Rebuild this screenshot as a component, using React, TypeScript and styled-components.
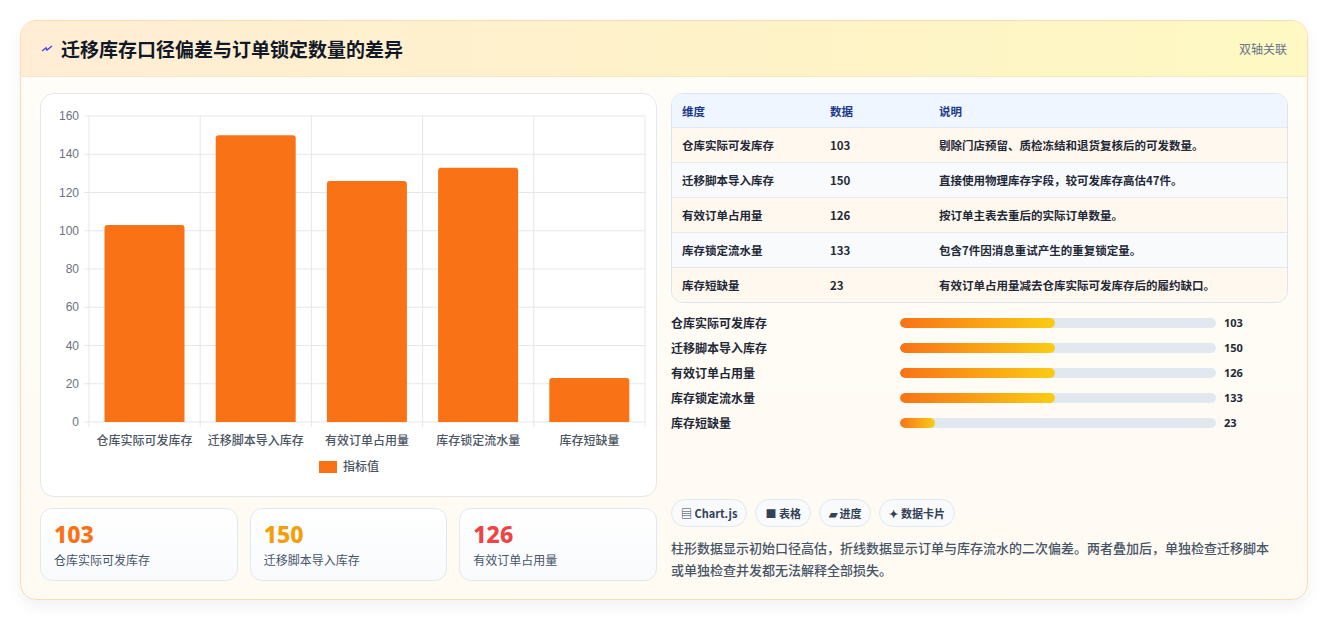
import React from 'react';
import styled, { createGlobalStyle } from 'styled-components';

const Global = createGlobalStyle`
  body { margin: 0; background: #f3f4f6; font-family: "Noto Sans CJK SC", "Noto Sans", sans-serif; }
`;

const Page = styled.div`
  padding: 20px 20px 22px 20px;
  background: #fff;
  height: 621px;
  box-sizing: border-box;
`;

const Card = styled.div`
  width: 1286px;
  border: 1px solid #f7dcb4;
  border-radius: 16px;
  background: linear-gradient(180deg, #fffdf9, #fffaf2);
  box-shadow: 0 6px 16px rgba(0, 0, 0, 0.06);
  overflow: hidden;
`;

const Header = styled.div`
  height: 55px;
  display: flex;
  align-items: center;
  justify-content: space-between;
  padding: 0 20px;
  background: linear-gradient(90deg, #ffedd5, #fef3c7 60%, #fef9c3);
  border-bottom: 1px solid #fde6c4;
`;

const Title = styled.h1`
  margin: 0;
  font-size: 19px;
  font-weight: 700;
  color: #111827;
  display: flex;
  align-items: center;
  gap: 8px;
`;

const Tag = styled.span`
  font-size: 12px;
  color: #64748b;
`;

const Body = styled.div`
  display: grid;
  grid-template-columns: 617px 617px;
  gap: 14px;
  padding: 16px 19px 18px 19px;
`;

const Col = styled.div`
  display: flex;
  flex-direction: column;
`;

const ChartBox = styled.div`
  height: 404px;
  border: 1px solid #e5e7eb;
  border-radius: 14px;
  background: #fff;
  box-sizing: border-box;
`;

const Stats = styled.div`
  display: grid;
  grid-template-columns: repeat(3, 1fr);
  gap: 12px;
  margin-top: 11px;
`;

const Stat = styled.div`
  height: 73px;
  box-sizing: border-box;
  border: 1px solid #e2e8f0;
  border-radius: 12px;
  background: linear-gradient(180deg, #fff, #f8fafc);
  padding: 12px 13px;
`;

const StatNum = styled.div<{ $c: string }>`
  font-size: 23px;
  font-weight: 800;
  color: ${p => p.$c};
  line-height: 26px;
  font-family: "Noto Sans", sans-serif;
`;

const StatLbl = styled.div`
  font-size: 12px;
  color: #475569;
  margin-top: 4px;
`;

const Table = styled.div`
  border: 1px solid #dbe3ee;
  border-radius: 12px;
  overflow: hidden;
  background: #fff;
`;

const Row = styled.div<{ $bg: string; $head?: boolean }>`
  display: grid;
  grid-template-columns: 148px 109px 1fr;
  height: ${p => (p.$head ? 33 : 35)}px;
  box-sizing: border-box;
  align-items: center;
  padding-left: 10px;
  background: ${p => p.$bg};
  border-top: ${p => (p.$head ? 'none' : '1px solid #e5eaf1')};
  font-size: 11.5px;
  color: ${p => (p.$head ? '#1e3a8a' : '#1f2937')};
  font-weight: ${p => (p.$head ? 700 : 600)};
`;

const Bars = styled.div`
  display: flex;
  flex-direction: column;
  gap: 8px;
  margin-top: 11px;
`;

const BarRow = styled.div`
  display: grid;
  grid-template-columns: 229px 316px 1fr;
  align-items: center;
  height: 17px;
  font-size: 12px;
  font-weight: 600;
  color: #1f2937;
`;

const Track = styled.div`
  height: 10px;
  border-radius: 5px;
  background: #e2e8f0;
  overflow: hidden;
`;

const Fill = styled.div`
  height: 100%;
  border-radius: 5px;
  background: linear-gradient(90deg, #f97316, #facc15);
`;

const Val = styled.span`
  padding-left: 8px;
  font-weight: 700;
  font-size: 11px;
  font-family: "Noto Sans", sans-serif;
`;

const Chips = styled.div`
  display: flex;
  gap: 8px;
  margin-top: auto;
`;

const Chip = styled.span`
  border: 1px solid #e2e8f0;
  border-radius: 14px;
  background: #f8fafc;
  padding: 5px 9px;
  font-size: 11px;
  font-weight: 600;
  color: #334155;
`;

const Note = styled.p`
  margin: 10px 0 0;
  width: 610px;
  font-size: 13px;
  line-height: 22px;
  font-weight: 500;
  color: #475569;
`;

const items = [
  { k: '仓库实际可发库存', v: 103, d: '剔除门店预留、质检冻结和退货复核后的可发数量。' },
  { k: '迁移脚本导入库存', v: 150, d: '直接使用物理库存字段，较可发库存高估47件。' },
  { k: '有效订单占用量', v: 126, d: '按订单主表去重后的实际订单数量。' },
  { k: '库存锁定流水量', v: 133, d: '包含7件因消息重试产生的重复锁定量。' },
  { k: '库存短缺量', v: 23, d: '有效订单占用量减去仓库实际可发库存后的履约缺口。' },
];

const fills = [49, 49, 49, 49, 11];

function Chart() {
  const x0 = 48, x1 = 604, yTop = 22, yBot = 328;
  const cw = (x1 - x0) / 5;
  const yy = (v: number) => yBot - (v / 160) * (yBot - yTop);
  return (
    <svg width="615" height="401" style={{ display: 'block' }}>
      {[0, 20, 40, 60, 80, 100, 120, 140, 160].map(t => (
        <g key={t}>
          <line x1={x0 - 5} x2={x1} y1={yy(t)} y2={yy(t)} stroke="#e5e7eb" />
          <text x={x0 - 10} y={yy(t) + 4} textAnchor="end" fontSize="12" fill="#6b7280" fontFamily="Liberation Sans">{t}</text>
        </g>
      ))}
      {[0, 1, 2, 3, 4, 5].map(i => (
        <line key={i} x1={x0 + i * cw} x2={x0 + i * cw} y1={yTop} y2={yBot + 5} stroke="#e5e7eb" />
      ))}
      {items.map((it, i) => {
        const bx = x0 + i * cw + 15.5, top = yy(it.v);
        return (
          <g key={it.k}>
            <path d={`M${bx} ${yBot} V${top + 3} Q${bx} ${top} ${bx + 3} ${top} H${bx + 77} Q${bx + 80} ${top} ${bx + 80} ${top + 3} V${yBot} Z`} fill="#f97316" />
            <text x={x0 + i * cw + cw / 2} y={yBot + 23} textAnchor="middle" fontSize="12" fontWeight="500" fill="#4b5563">{it.k}</text>
          </g>
        );
      })}
      <rect x="278" y="367" width="18" height="12" fill="#f97316" />
      <text x="302" y="377" fontSize="12" fontWeight="500" fill="#4b5563">指标值</text>
    </svg>
  );
}

export default function App() {
  return (
    <Page>
      <Global />
      <Card>
        <Header>
          <Title>
            <svg width="12" height="12" viewBox="0 0 12 12"><path d="M1 8 L5 5 L6 7 L11 3" stroke="#4f46e5" strokeWidth="1.5" fill="none" /></svg>
            迁移库存口径偏差与订单锁定数量的差异
          </Title>
          <Tag>双轴关联</Tag>
        </Header>
        <Body>
          <Col>
            <ChartBox><Chart /></ChartBox>
            <Stats>
              <Stat><StatNum $c="#f97316">103</StatNum><StatLbl>仓库实际可发库存</StatLbl></Stat>
              <Stat><StatNum $c="#f59e0b">150</StatNum><StatLbl>迁移脚本导入库存</StatLbl></Stat>
              <Stat><StatNum $c="#ef4444">126</StatNum><StatLbl>有效订单占用量</StatLbl></Stat>
            </Stats>
          </Col>
          <Col>
            <Table>
              <Row $head $bg="#eff6ff"><span>维度</span><span>数据</span><span>说明</span></Row>
              {items.map((it, i) => (
                <Row key={it.k} $bg={i % 2 === 0 ? '#fff8ee' : '#f8fafc'}>
                  <span>{it.k}</span><span>{it.v}</span><span>{it.d}</span>
                </Row>
              ))}
            </Table>
            <Bars>
              {items.map((it, i) => (
                <BarRow key={it.k}>
                  <span>{it.k}</span>
                  <Track><Fill style={{ width: `${fills[i]}%` }} /></Track>
                  <Val>{it.v}</Val>
                </BarRow>
              ))}
            </Bars>
            <Chips>
              <Chip>▤ Chart.js</Chip>
              <Chip>■ 表格</Chip>
              <Chip>▰ 进度</Chip>
              <Chip>✦ 数据卡片</Chip>
            </Chips>
            <Note>柱形数据显示初始口径高估，折线数据显示订单与库存流水的二次偏差。两者叠加后，单独检查迁移脚本或单独检查并发都无法解释全部损失。</Note>
          </Col>
        </Body>
      </Card>
    </Page>
  );
}
